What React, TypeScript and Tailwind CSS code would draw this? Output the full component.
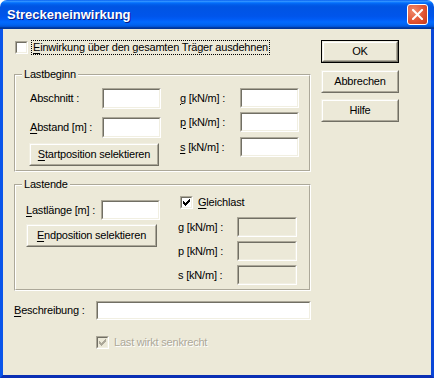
import React from "react";

const face = "bg-[#ECE9D8]";

const Edit = ({ w, h = 20, disabled = false }: { w: number; h?: number; disabled?: boolean }) => (
  <div
    className="border border-t-[#ACA899] border-l-[#ACA899] border-b-white border-r-white"
    style={{ width: w, height: h }}
  >
    <div
      className={`h-full w-full border border-t-[#716F64] border-l-[#716F64] border-b-[#F1EFE2] border-r-[#F1EFE2] ${
        disabled ? "bg-[#ECE9D8]" : "bg-white"
      }`}
    />
  </div>
);

const Check = ({ checked = false, disabled = false }: { checked?: boolean; disabled?: boolean }) => (
  <div className="h-[13px] w-[13px] shrink-0 border border-t-[#ACA899] border-l-[#ACA899] border-b-white border-r-white">
    <div
      className={`flex h-full w-full items-center justify-center border border-t-[#716F64] border-l-[#716F64] border-b-[#F1EFE2] border-r-[#F1EFE2] ${
        disabled ? "bg-[#ECE9D8]" : "bg-white"
      }`}
    >
      {checked && (
        <svg width="7" height="7" viewBox="0 0 7 7">
          <path
            d="M0 2h1v1h1v1h1v-1h1v-1h1v-1h1v-1h1v3h-1v1h-1v1h-1v1h-1v1h-1v-1h-1v-1h-1z"
            fill={disabled ? "#ACA899" : "#000"}
          />
        </svg>
      )}
    </div>
  </div>
);

const Btn = ({
  w,
  children,
  def = false,
}: {
  w: number;
  children: React.ReactNode;
  def?: boolean;
}) => (
  <div className={def ? "border border-black" : ""} style={{ width: w, height: 23 }}>
    <div className="h-full w-full border border-t-[#F1EFE2] border-l-[#F1EFE2] border-b-[#716F64] border-r-[#716F64]">
      <div className="flex h-full w-full items-center justify-center border border-t-white border-l-white border-b-[#ACA899] border-r-[#ACA899] bg-[#ECE9D8] text-black">
        {children}
      </div>
    </div>
  </div>
);

const Group = ({
  title,
  h,
  children,
}: {
  title: string;
  h: number;
  children: React.ReactNode;
}) => (
  <div
    className="relative w-[297px] border border-t-[#ACA899] border-l-[#ACA899] border-b-white border-r-white"
    style={{ height: h }}
  >
    <div className="h-full w-full border border-t-white border-l-white border-b-[#ACA899] border-r-[#ACA899]">
      {children}
    </div>
    <span className={`absolute left-[7px] top-[-8px] px-[2px] leading-[14px] ${face}`}>{title}</span>
  </div>
);

const U = ({ children }: { children: React.ReactNode }) => <span className="underline underline-offset-2">{children}</span>;

export default function App() {
  return (
    <div className="h-[378px] w-[434px] bg-white font-['Liberation_Sans',Arial,sans-serif] text-[11px] tracking-[-0.2px] text-black">
      <div className="flex h-full w-full flex-col overflow-hidden rounded-t-[7px]">
        <div className="flex h-[29px] shrink-0 items-center justify-between bg-[linear-gradient(to_bottom,#0058EE_0%,#3593FF_4%,#288EFF_6%,#127DFF_8%,#036FFC_10%,#0262EE_14%,#0057E5_20%,#0054E3_24%,#0055EB_56%,#005BF5_66%,#026AFE_76%,#0062EF_86%,#0052D6_92%,#0040AB_94%,#003092_100%)] pl-[7px] pr-[6px]">
          <span className="pt-[1px] text-[13px] font-bold tracking-normal text-white [text-shadow:1px_1px_0_#0A1883]">
            Streckeneinwirkung
          </span>
          <div className="flex h-[21px] w-[21px] items-center justify-center rounded-[3px] border border-white bg-[radial-gradient(circle_at_30%_30%,#F08A6C,#E0502F_60%,#C23A1B)]">
            <svg width="11" height="11" viewBox="0 0 11 11">
              <path d="M1 1L10 10M10 1L1 10" stroke="#fff" strokeWidth="2" strokeLinecap="square" />
            </svg>
          </div>
        </div>

        <div className={`flex flex-1 border-x-[3px] border-b-[3px] border-l-[#0A55EA] border-r-[#0A47D8] border-b-[#0A2FB4] ${face}`}>
          <div className="ml-[11px] flex w-[297px] flex-col">
            <div className="mt-[11px] flex h-[15px] items-center">
              <div className="ml-[1px]">
                <Check />
              </div>
              <span className="ml-[3px] border border-dotted border-black px-[1px] leading-[13px]">
                <U>E</U>inwirkung über den gesamten Träger ausdehnen
              </span>
            </div>

            <div className="mt-[19px]">
              <Group title="Lastbeginn" h={98}>
                <div className="flex pl-[14px] pt-[12px]">
                  <div className="flex w-[150px] flex-col">
                    <div className="flex h-[21px] items-center">
                      <span className="w-[72px]">Abschnitt :</span>
                      <Edit w={59} h={21} />
                    </div>
                    <div className="mt-[8px] flex h-[21px] items-center">
                      <span className="w-[72px]">
                        <U>A</U>bstand [m] :
                      </span>
                      <Edit w={59} h={21} />
                    </div>
                    <div className="ml-[-1px] mt-[5px]">
                      <Btn w={130}>
                        <U>S</U>tartposition selektieren
                      </Btn>
                    </div>
                  </div>
                  <div className="flex flex-col">
                    <div className="flex h-[20px] items-center">
                      <span className="w-[60px]">
                        <U>g</U> [kN/m] :
                      </span>
                      <Edit w={59} />
                    </div>
                    <div className="mt-[4px] flex h-[20px] items-center">
                      <span className="w-[60px]">
                        <U>p</U> [kN/m] :
                      </span>
                      <Edit w={59} />
                    </div>
                    <div className="mt-[5px] flex h-[20px] items-center">
                      <span className="w-[60px]">
                        <U>s</U> [kN/m] :
                      </span>
                      <Edit w={59} />
                    </div>
                  </div>
                </div>
              </Group>
            </div>

            <div className="mt-[12px]">
              <Group title="Lastende" h={107}>
                <div className="flex pl-[10px]">
                  <div className="flex w-[152px] flex-col pt-[14px]">
                    <div className="flex h-[20px] items-center">
                      <span className="w-[75px]">
                        <U>L</U>astlänge [m] :
                      </span>
                      <Edit w={59} />
                    </div>
                    <div className="mt-[4px]">
                      <Btn w={131}>
                        <U>E</U>ndposition selektieren
                      </Btn>
                    </div>
                  </div>
                  <div className="flex flex-col pt-[10px]">
                    <div className="ml-[2px] flex h-[13px] items-center">
                      <Check checked />
                      <span className="ml-[5px]">
                        <U>G</U>leichlast
                      </span>
                    </div>
                    <div className="mt-[8px] flex h-[20px] items-center">
                      <span className="w-[59px]">g [kN/m] :</span>
                      <Edit w={60} disabled />
                    </div>
                    <div className="mt-[4px] flex h-[20px] items-center">
                      <span className="w-[59px]">p [kN/m] :</span>
                      <Edit w={60} disabled />
                    </div>
                    <div className="mt-[4px] flex h-[20px] items-center">
                      <span className="w-[59px]">s [kN/m] :</span>
                      <Edit w={60} disabled />
                    </div>
                  </div>
                </div>
              </Group>
            </div>

            <div className="mt-[10px] flex h-[19px] items-center">
              <span className="w-[82px]">
                <U>B</U>eschreibung :
              </span>
              <Edit w={215} h={19} />
            </div>

            <div className="ml-[82px] mt-[16px] flex h-[13px] items-center">
              <Check checked disabled />
              <span className="ml-[5px] text-[#ACA899] [text-shadow:1px_1px_0_#fff]">Last wirkt senkrecht</span>
            </div>
          </div>

          <div className="ml-[10px] mt-[11px] flex flex-col">
            <Btn w={78} def>
              OK
            </Btn>
            <div className="mt-[7px]">
              <Btn w={78}>Abbrechen</Btn>
            </div>
            <div className="mt-[6px]">
              <Btn w={78}>Hilfe</Btn>
            </div>
          </div>
        </div>
      </div>
    </div>
  );
}
